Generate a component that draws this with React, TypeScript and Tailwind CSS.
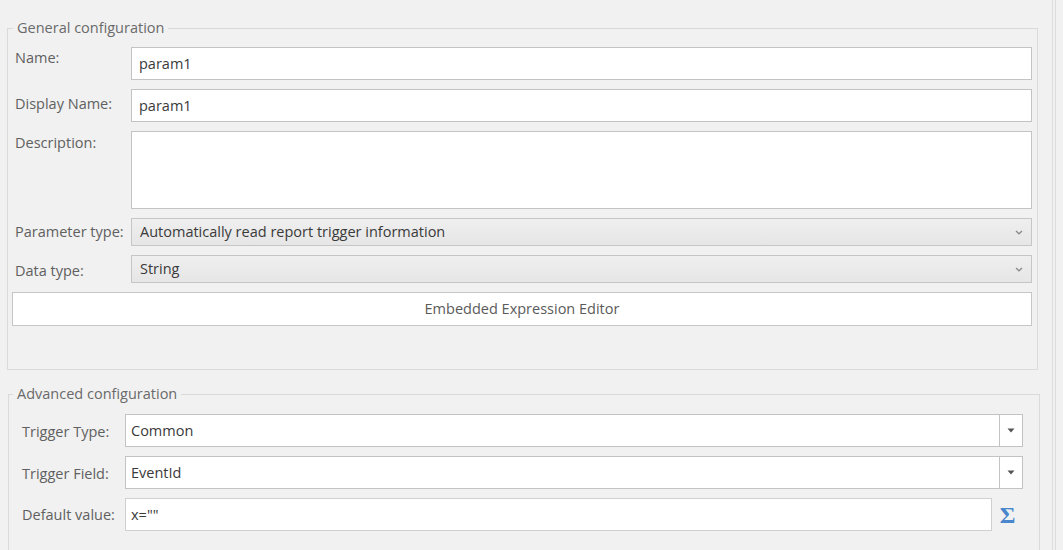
import React from "react";

const font = "font-['Open_Sans','Noto_Sans',sans-serif]";

function Chevron() {
  return (
    <svg width="8" height="5" viewBox="0 0 8 5" className="shrink-0">
      <path d="M1 1 L4 3.8 L7 1" fill="none" stroke="#8a8a8a" strokeWidth="1.3" />
    </svg>
  );
}

function Triangle() {
  return (
    <svg width="8" height="5" viewBox="0 0 8 5">
      <path d="M0.5 0.5 H7.5 L4 4.5 Z" fill="#555" />
    </svg>
  );
}

// flat grey combo used in the general section
function FlatCombo({ value }: { value: string }) {
  return (
    <div className="flex-1 h-[28px] flex items-center justify-between pl-[8px] pr-[8px] border border-[#c6c6c6] bg-gradient-to-b from-[#efefef] to-[#e6e6e6] text-[#3a3a3a]">
      <span>{value}</span>
      <Chevron />
    </div>
  );
}

// white combo with separate dropdown button
function BoxCombo({ value }: { value: string }) {
  return (
    <div className="flex-1 h-[33px] flex border border-[#c3c3c3] bg-white text-[#3a3a3a]">
      <div className="flex-1 flex items-center pl-[5px]">{value}</div>
      <div className="w-[23px] border-l border-[#c3c3c3] flex items-center justify-center">
        <Triangle />
      </div>
    </div>
  );
}

export default function App() {
  return (
    <div className={`w-[1063px] h-[550px] overflow-hidden bg-[#f1f1f1] flex text-[14.5px] leading-[20px] ${font}`}>
      <div className="w-[1053px] border-r border-[#dcdcdc] pt-[18px]">
        {/* General configuration */}
        <fieldset className="ml-[7px] w-[1031px] border border-[#dadada]">
          <legend className="ml-[5px] px-[4px] text-[#6a6a6a]">General configuration</legend>
          <div className="flex flex-col gap-[9px] pt-[9px] pl-[4px] pr-[5px] pb-[43px]">
            <div className="flex items-start">
              <label className="w-[119px] pl-[3px] pt-[1px] text-[#606060]">Name:</label>
              <div className="flex-1 h-[33px] border border-[#c3c3c3] bg-white pl-[7px] pt-[6px] text-[#3a3a3a]">param1</div>
            </div>
            <div className="flex items-start">
              <label className="w-[119px] pl-[3px] pt-[5px] text-[#606060]">Display Name:</label>
              <div className="flex-1 h-[33px] border border-[#c3c3c3] bg-white pl-[7px] pt-[6px] text-[#3a3a3a]">param1</div>
            </div>
            <div className="flex items-start">
              <label className="w-[119px] pl-[3px] pt-[2px] text-[#606060]">Description:</label>
              <div className="flex-1 h-[78px] border border-[#c3c3c3] bg-white" />
            </div>
            <div className="flex items-center">
              <label className="w-[119px] pl-[3px] text-[#606060]">Parameter type:</label>
              <FlatCombo value="Automatically read report trigger information" />
            </div>
            <div className="flex items-center">
              <label className="w-[119px] pl-[3px] pt-[3px] text-[#606060]">Data type:</label>
              <FlatCombo value="String" />
            </div>
            <button className="h-[34px] w-full border border-[#c6c6c6] bg-white text-[#5a5a5a] text-center">
              Embedded Expression Editor
            </button>
          </div>
        </fieldset>

        {/* Advanced configuration */}
        <fieldset className="mt-[14px] ml-[8px] w-[1032px] border border-[#dadada]">
          <legend className="ml-[4px] px-[4px] text-[#6a6a6a]">Advanced configuration</legend>
          <div className="flex flex-col gap-[9px] pt-[10px] pl-[13px] pr-[16px] pb-[20px]">
            <div className="flex items-center">
              <label className="w-[103px] pt-[2px] text-[#606060]">Trigger Type:</label>
              <BoxCombo value="Common" />
            </div>
            <div className="flex items-center">
              <label className="w-[103px] pt-[2px] text-[#606060]">Trigger Field:</label>
              <BoxCombo value="EventId" />
            </div>
            <div className="flex items-center">
              <label className="w-[103px] pt-[1px] text-[#606060]">Default value:</label>
              <div className="flex-1 h-[33px] border border-[#d0d0d0] bg-white flex items-center pl-[5px] text-[#3a3a3a]">
                x=""
              </div>
              <div className="w-[31px] flex items-center justify-center pt-[1px]">
                <span className="text-[24px] leading-none font-bold text-[#4a86cc] font-['Liberation_Serif',serif]">Σ</span>
              </div>
            </div>
          </div>
        </fieldset>
      </div>
      <div className="w-[3px] border-r border-[#dcdcdc]" />
    </div>
  );
}
